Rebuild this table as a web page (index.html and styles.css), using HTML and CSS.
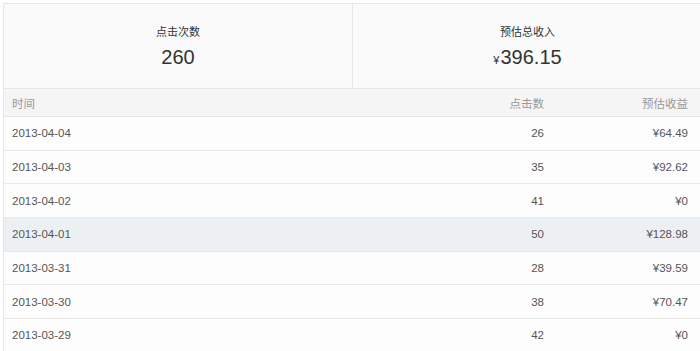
FILE: index.html
```html
<!DOCTYPE html>
<html lang="zh-CN">
<head>
<meta charset="utf-8">
<title>收入统计</title>
<link rel="stylesheet" href="styles.css">
</head>
<body>
<div class="panel">
  <div class="stats">
    <div class="stat">
      <div class="stat-label">点击次数</div>
      <div class="stat-value">260</div>
    </div>
    <div class="stat">
      <div class="stat-label">预估总收入</div>
      <div class="stat-value"><span class="yen">¥</span>396.15</div>
    </div>
  </div>
  <table class="report">
    <thead>
      <tr><th class="c-date">时间</th><th class="c-num">点击数</th><th class="c-inc">预估收益</th></tr>
    </thead>
    <tbody>
      <tr><td class="c-date">2013-04-04</td><td class="c-num">26</td><td class="c-inc">¥64.49</td></tr>
      <tr><td class="c-date">2013-04-03</td><td class="c-num">35</td><td class="c-inc">¥92.62</td></tr>
      <tr><td class="c-date">2013-04-02</td><td class="c-num">41</td><td class="c-inc">¥0</td></tr>
      <tr class="hover"><td class="c-date">2013-04-01</td><td class="c-num">50</td><td class="c-inc">¥128.98</td></tr>
      <tr><td class="c-date">2013-03-31</td><td class="c-num">28</td><td class="c-inc">¥39.59</td></tr>
      <tr><td class="c-date">2013-03-30</td><td class="c-num">38</td><td class="c-inc">¥70.47</td></tr>
      <tr><td class="c-date">2013-03-29</td><td class="c-num">42</td><td class="c-inc">¥0</td></tr>
    </tbody>
  </table>
</div>
</body>
</html>
```
FILE: styles.css
```css
html, body {
  margin: 0;
  padding: 0;
  background: #fff;
}
body {
  padding: 3px 0 0 3px;
  font-family: "Liberation Sans", Arial, "Noto Sans CJK SC", sans-serif;
  color: #555;
  overflow: hidden;
}
.panel {
  width: 698px;
  border-left: 1px solid #e6e6e6;
  border-top: 1px solid #e6e6e6;
}
.stats {
  display: grid;
  grid-template-columns: 348px 1fr;
  background: #fafafa;
  height: 84px;
}
.stat {
  display: flex;
  flex-direction: column;
  align-items: center;
  padding-top: 21px;
}
.stat + .stat {
  border-left: 1px solid #e6e6e6;
}
.stat-label {
  font-size: 11px;
  line-height: 14px;
  color: #333;
}
.stat-value {
  margin-top: 6px;
  font-size: 20px;
  line-height: 24px;
  color: #333;
}
.yen {
  font-size: 11px;
  margin-right: 1px;
}
.report {
  width: 100%;
  border-collapse: collapse;
  font-size: 11.5px;
}
.report th {
  font-weight: normal;
  color: #999;
  background: #f5f5f5;
  height: 27px;
  padding: 0 14px 0 8px;
  border-top: 1px solid #e6e6e6;
  border-bottom: 1px solid #e6e6e6;
}
.report td {
  height: 32.67px;
  padding: 0 14px 0 8px;
  border-bottom: 1px solid #e8e8e8;
  background: #fdfdfd;
  color: #555;
}
.report tr.hover td {
  background: #edf0f3;
}
.c-date { text-align: left; }
.c-num { text-align: right; width: 160px; }
.c-inc { text-align: right; width: 122px; }
```
